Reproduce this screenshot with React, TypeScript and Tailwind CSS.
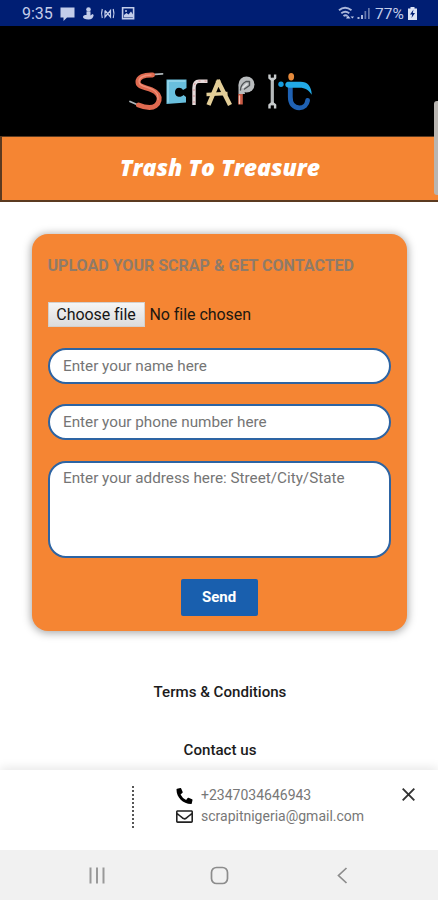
import { FaPhoneAlt, FaRegEnvelope } from 'react-icons/fa';

function StatusBar() {
  return (
    <div className="flex h-[26px] items-center justify-between bg-[#001e73] pl-[22px] pr-[21px] text-[#c3cdea]">
      <div className="flex items-center">
        <span className="w-[38px] text-[16px] leading-[26px] pt-[2px]">9:35</span>
        <svg width="78" height="16" viewBox="60 5 78 16" fill="currentColor">
          <path d="M60.500 7.500h14v10h-7.500l-3.500 3.500v-3.500h-3z" />
          <circle cx="88.500" cy="9.500" r="2.300" />
          <path d="M86.500 11.500h4v4l2-1.500 1.200 1c-.5 3-2.200 4.500-5.200 4.500-3.500 0-5.500-1-5.500-2.500s1.300-2 3.500-2z" />
          <g fill="none" stroke="currentColor" strokeWidth="1.200">
            <path d="M102.300 9q-1.500 4.500 0 9M113.200 9q1.500 4.500 0 9M105 10.500v6.500l5.500-6.500v6.500l-5.500-6.500" />
            <path d="M122.600 7.800h11v11h-11z" strokeWidth="1.600" />
          </g>
          <path d="M124 17.500v-2.500l2.500-2 2 1.500 2.500-3 2 3v3z" />
          <circle cx="126" cy="11" r="1" />
        </svg>
      </div>
      <div className="flex items-center">
        <svg width="35" height="16" viewBox="337 5 35 16">
          <g fill="none" stroke="#aab7db" strokeWidth="1.900">
            <path d="M339 10.200q6-5 12.500 0M341.300 13.200q4-3 8 0M343.500 16q2-1.500 4 0" />
          </g>
          <path d="M346 18.500l2-3 2.500 3zM352.500 13v5M350.500 16.500l2 2 1.500-2" fill="#c3cdea" />
          <path d="M357.500 19v-2h2v2zM361 19v-4h2v4z" fill="#aab7db" />
          <path d="M364.500 19v-8h1.700v8zM368 19V8h1.700v11z" fill="#6678ad" />
        </svg>
        <span className="w-[36px] pl-[3px] pt-[2px] text-[15.500px] leading-[26px]">77%</span>
        <svg width="9" height="13" viewBox="0 0 9 13">
          <path d="M2.500 0h4v1.500h2.500v11.500H0V1.500h2.500z" fill="#dde3f5" />
          <path d="M5.500 2.500L2 7.500h2.200L3.500 11 7 6H4.800z" fill="#001e73" />
        </svg>
      </div>
    </div>
  );
}

function Logo() {
  return (
    <svg width="190" height="48" viewBox="124 67 190 48" fill="none" strokeLinecap="round" strokeLinejoin="round">
      {/* S - cable */}
      <path d="M155 74.300l7.500-.4M138 105l-8-3.500" stroke="#aeb6ba" strokeWidth="1.800" />
      <path d="M152.500 75c-8.500-.3-14.500 2-14.500 7 0 5.500 8 5 14 8 5.500 2.500 8 6 7 10.500-1 4.500-5 7-9.500 7-4 0-7.500-1-11-2.500" stroke="#df6a50" strokeWidth="5" />
      <path d="M151 75c-7 .2-12 2.500-12 6.500 0 5 8 5 13.500 8 4.500 2.500 6 6 5.500 10" stroke="#f09079" strokeWidth="1.300" />
      {/* C */}
      <path d="M166.500 79.500h20v8.500l-3.500 2c-2-3.500-8-3-8 2 0 5.500 6 6 8.500 3l2.500 2v5.500l-19.500 1.500z" fill="#69bfdd" />
      <path d="M168 81h17M168 81v21" stroke="#98d8ec" strokeWidth="1.500" />
      {/* R - straw */}
      <path d="M194 105V88c0-4.500 2-6.800 5-6.800h8.500" stroke="#e6dada" strokeWidth="3.400" strokeLinecap="butt" />
      <path d="M194 103V88c0-4.500 2-6.800 5-6.800h8" stroke="#d9a0a2" strokeWidth="1.200" strokeLinecap="butt" strokeDasharray="2 4" />
      {/* A - planks */}
      <g stroke="#e3ce98" strokeWidth="4.400" strokeLinecap="butt">
        <path d="M208.500 105l10.500-25M217.500 80l12.500 25" />
        <path d="M206.500 94.500l21-1" strokeWidth="3.400" />
      </g>
      {/* P - brush and disc */}
      <path d="M240.500 94v10.500" stroke="#c95a44" strokeWidth="4.600" strokeLinecap="butt" />
      <path d="M239.500 96v7.500" stroke="#f3c0b4" strokeWidth="1.300" />
      <circle cx="246.500" cy="84.500" r="8" fill="#b9bcbe" />
      <path d="M238.500 85l5 2 1.500 7h-6.500z" fill="#b9bcbe" />
      <path d="M240.500 90c0-4 2-6.500 5.500-8.500h3.500v4l-5 3.500" stroke="#505456" strokeWidth="1.400" />
      <path d="M243 87.500l4-3.500" stroke="#e4e6e7" strokeWidth="1.600" />
      {/* I - spanner */}
      <path d="M272.300 79v25" stroke="#b6babb" strokeWidth="3.200" />
      <path d="M269.500 74.500v3.500l2.800 2 2.800-2v-3.500M269.500 108.500V105l2.800-2 2.800 2v3.500" stroke="#c8cccd" strokeWidth="2.400" strokeLinecap="butt" />
      {/* t */}
      <ellipse cx="291.200" cy="76.800" rx="2.900" ry="3.700" fill="#e58a3c" />
      <circle cx="281" cy="84.300" r="2.700" fill="#159bdf" />
      <path d="M290.300 87v10c0 7 3.500 10.800 9 10.800 4.500 0 7.700-3 8.300-7.300" stroke="#1f62b4" strokeWidth="4.800" />
      <path d="M287.500 81.800h13c7 0 11 4.500 11.300 13-3-4.500-6.500-7-12.300-7H289c-3.500 0-5.500-4-1.500-6z" fill="#22a9e6" />
    </svg>
  );
}

const field =
  'block w-full rounded-[18px] border-2 border-[#2d64a3] bg-white px-[13.500px] text-[15.250px] text-black placeholder:text-[#757575] outline-none';

function UploadForm() {
  return (
    <form className="mx-auto mt-[32px] flex h-[397px] w-[375px] flex-col rounded-[16px] bg-[#f58533] px-4 shadow-[0_1px_9px_1px_rgba(0,0,0,0.35)]">
      <h2 className="mt-[21px] whitespace-nowrap text-[16.050px] font-bold leading-[22px] text-[#8f7b69]">
        UPLOAD YOUR SCRAP &amp; GET CONTACTED
      </h2>
      <div className="mt-[25px] flex h-[25px] items-center text-[16px] tracking-[-0.050px] text-[#201710]">
        <button type="button" className="h-[25px] w-[97px] whitespace-nowrap border border-[#d2d0ce] bg-linear-to-b from-[#f5f5f5] to-[#dcdcdc] text-[#161616]">
          Choose file
        </button>
        <span className="ml-[5px]">No file chosen</span>
      </div>
      <input className={`${field} mt-[21px] h-[36px] shrink-0`} placeholder="Enter your name here" />
      <input className={`${field} mt-[20px] h-[36px] shrink-0`} placeholder="Enter your phone number here" />
      <textarea
        className={`${field} mt-[21px] h-[97px] shrink-0 resize-none pt-[5px] leading-[20px]`}
        placeholder="Enter your address here: Street/City/State"
      />
      <button
        type="button"
        className="mt-[21px] h-[37px] w-[77px] shrink-0 self-center rounded-[2px] bg-[#195fae] text-[15px] font-bold text-white"
      >
        Send
      </button>
    </form>
  );
}

function ContactBar() {
  return (
    <div className="flex h-[80px] items-start bg-white shadow-[0_-2px_10px_rgba(0,0,0,0.1)]">
      <div className="ml-[132px] mt-[16px] h-[42px] w-0 border-l-2 border-dotted border-[#555]" />
      <div className="ml-[42px] mt-[15px] text-[14px] leading-[21px] text-[#777]">
        <div className="flex items-center">
          <FaPhoneAlt className="h-4 w-[17px] text-black" />
          <span className="ml-[8px]">+2347034646943</span>
        </div>
        <div className="flex items-center">
          <FaRegEnvelope className="h-[17px] w-[17px] text-[#222]" />
          <span className="ml-[8px]">scrapitnigeria@gmail.com</span>
        </div>
      </div>
      <svg className="ml-auto mr-[23px] mt-[18px]" width="13" height="13" viewBox="0 0 13 13" stroke="#333" strokeWidth="1.900">
        <path d="M.7.7l11.600 11.600M12.300.7L.7 12.300" />
      </svg>
    </div>
  );
}

function NavBar() {
  return (
    <div className="flex h-[50px] items-center bg-[#f1f1f1]">
      <svg width="438" height="50" viewBox="0 850 438 50" fill="none" stroke="#8c8c8c" strokeWidth="1.700">
        <path d="M90.500 867.500v16M97 867.500v16M103.500 867.500v16" stroke="#999" strokeWidth="2" />
        <rect x="211.500" y="867.500" width="16" height="16" rx="5" />
        <path d="M346.500 868l-8 7.500 8 7.500" />
      </svg>
    </div>
  );
}

export default function App() {
  return (
    <div className="relative flex h-[900px] w-[438px] flex-col overflow-hidden bg-white font-[Roboto,'Liberation_Sans',sans-serif]">
      <StatusBar />
      <header className="flex h-[110px] shrink-0 items-start justify-center bg-black pt-[41px]">
        <Logo />
      </header>
      <div className="flex h-[66px] shrink-0 items-center justify-center border-2 border-r-0 border-t border-[#5b3a20] bg-[#f58533]">
        <h1 className="-mt-[2px] whitespace-nowrap font-['Open_Sans',sans-serif] text-[23px] font-extrabold italic text-white">
          Trash To Treasure
        </h1>
      </div>
      <main className="flex-1">
        <UploadForm />
        <div className="mt-[50px] flex flex-col items-center pl-[2px] text-[15.100px] font-medium leading-[22px] text-[#1b1b1b]">
          <a href="#">Terms &amp; Conditions</a>
          <a href="#" className="mt-[36px]">Contact us</a>
        </div>
      </main>
      <ContactBar />
      <NavBar />
      {/* scroll thumb */}
      <div className="absolute right-0 top-[101px] h-[94px] w-[4px] rounded-l-[3px] bg-[#b9b5b1]" />
    </div>
  );
}
